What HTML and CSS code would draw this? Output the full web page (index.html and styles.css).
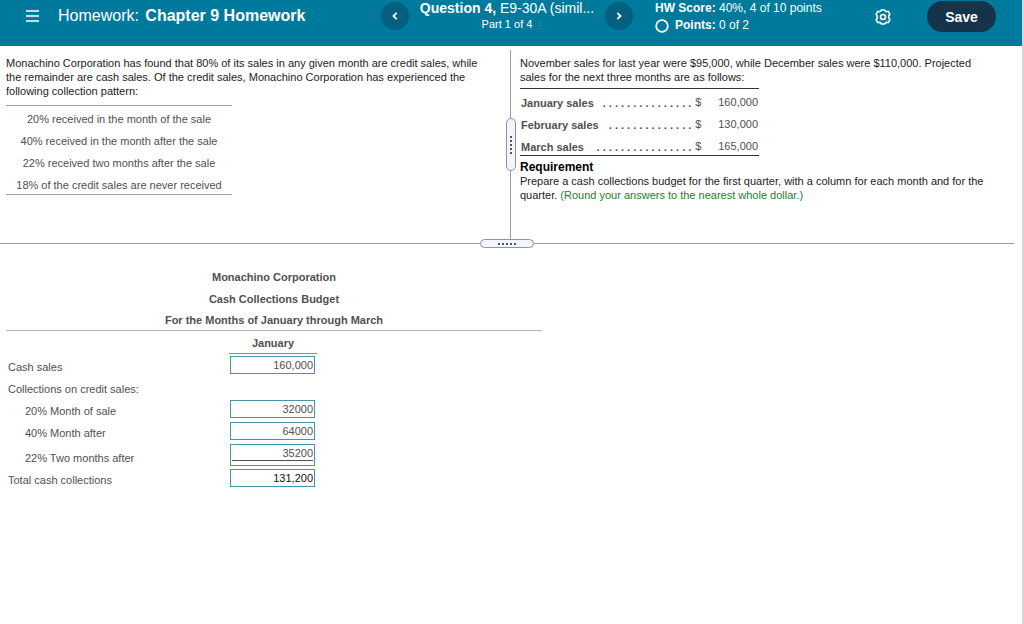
FILE: index.html
```html
<!DOCTYPE html>
<html lang="en">
<head>
  <meta charset="UTF-8" />
  <meta name="viewport" content="width=device-width, initial-scale=1" />
  <title>Chapter 9 Homework</title>
  <link rel="stylesheet" href="styles.css">
</head>
<body>
  <header class="topbar">
    <div class="brand">
      <button type="button" class="icon-btn" aria-label="Menu">
        <svg width="14" height="12" viewBox="0 0 14 12" stroke="#fff" stroke-width="1.6"><path d="M0 1h13M0 6h13M0 11h13" /></svg>
      </button>
      <h1>Homework: <b>Chapter 9 Homework</b></h1>
    </div>

    <nav class="question-nav">
      <button type="button" class="round-btn" aria-label="Previous question">
        <svg width="6" height="8" viewBox="0 0 6 8" fill="none" stroke="#fff" stroke-width="1.8"><path d="M4.7 0.8L1.5 4l3.2 3.2" /></svg>
      </button>
      <div class="question">
        <div class="question-title"><b>Question 4,</b> E9-30A (simil...</div>
        <div class="question-part">Part 1 of 4</div>
      </div>
      <button type="button" class="round-btn" aria-label="Next question">
        <svg width="6" height="8" viewBox="0 0 6 8" fill="none" stroke="#fff" stroke-width="1.8"><path d="M1.3 0.8L4.5 4 1.3 7.2" /></svg>
      </button>
    </nav>

    <div class="status">
      <div class="score">
        <div><b>HW Score:</b> 40%, 4 of 10 points</div>
        <div class="points">
          <svg width="14" height="14" viewBox="0 0 14 14"><circle cx="7" cy="7" r="5.8" fill="none" stroke="#fff" stroke-width="1.8" /></svg>
          <span><b>Points:</b> 0 of 2</span>
        </div>
      </div>
      <div class="actions">
        <button type="button" class="icon-btn" aria-label="Settings">
          <svg width="16" height="16" viewBox="0 0 16 16" fill="none" stroke="#fff" stroke-width="1.6" stroke-linejoin="round">
            <path d="M6.4 1h3.2q.6 1.900 2.400 1.500l1.200-.1 1.700 2.900q-1.700 1.200-1.200 2.700 0 1.200 1.200 2.700l-1.700 2.900q-1.900-.6-3 .6l-.6.8H6.400q-.6-1.900-2.400-1.500l-1.200.1-1.700-2.900q1.700-1.200 1.200-2.700 0-1.200-1.200-2.700l1.700-2.900q1.900.6 3-.6z" />
            <circle cx="8" cy="8" r="2.5" />
          </svg>
        </button>
        <button type="button" class="save-btn">Save</button>
      </div>
    </div>
  </header>

  <main>
    <div class="panes">
      <section class="pane">
        <p>Monachino Corporation has found that 80% of its sales in any given month are credit sales, while the remainder are cash sales. Of the credit sales, Monachino Corporation has experienced the following collection pattern:</p>
        <table class="pattern">
          <tr><td>20% received in the month of the sale</td></tr>
          <tr><td>40% received in the month after the sale</td></tr>
          <tr><td>22% received two months after the sale</td></tr>
          <tr><td>18% of the credit sales are never received</td></tr>
        </table>
      </section>

      <section class="pane pane-right">
        <p>November sales for last year were $95,000, while December sales were $110,000. Projected sales for the next three months are as follows:</p>
        <table class="sales">
          <tr>
            <th scope="row"><span class="leader"><span>January sales</span><span>. . . . . . . . . . . . . . .</span></span></th>
            <td>$</td>
            <td class="num">160,000</td>
          </tr>
          <tr>
            <th scope="row"><span class="leader"><span>February sales</span><span>. . . . . . . . . . . . . .</span></span></th>
            <td>$</td>
            <td class="num">130,000</td>
          </tr>
          <tr>
            <th scope="row"><span class="leader"><span>March sales</span><span>. . . . . . . . . . . . . . . .</span></span></th>
            <td>$</td>
            <td class="num">165,000</td>
          </tr>
        </table>
        <h2>Requirement</h2>
        <p>Prepare a cash collections budget for the first quarter, with a column for each month and for the quarter. <span class="hint">(Round your answers to the nearest whole dollar.)</span></p>
      </section>

      <!-- drag handles on the split lines -->
      <div class="grip grip-v"><i></i><i></i><i></i><i></i><i></i></div>
      <div class="grip grip-h"><i></i><i></i><i></i><i></i><i></i></div>
    </div>

    <table class="budget">
      <thead>
        <tr><th colspan="3">Monachino Corporation</th></tr>
        <tr><th colspan="3">Cash Collections Budget</th></tr>
        <tr class="ruled"><th colspan="3">For the Months of January through March</th></tr>
        <tr class="months"><td class="col-label"></td><th scope="col" class="col-month">January</th><td></td></tr>
      </thead>
      <tbody>
        <tr class="first-item">
          <td><label for="cash-sales">Cash sales</label></td>
          <td class="entry"><span class="box"><input type="text" id="cash-sales" value="160,000"></span></td>
          <td></td>
        </tr>
        <tr>
          <td>Collections on credit sales:</td>
          <td></td>
          <td></td>
        </tr>
        <tr>
          <td class="indent"><label for="month-of-sale">20% Month of sale</label></td>
          <td class="entry"><span class="box"><input type="text" id="month-of-sale" value="32000"></span></td>
          <td></td>
        </tr>
        <tr>
          <td class="indent"><label for="month-after">40% Month after</label></td>
          <td class="entry"><span class="box"><input type="text" id="month-after" value="64000"></span></td>
          <td></td>
        </tr>
        <tr class="last-item">
          <td class="indent"><label for="two-months">22% Two months after</label></td>
          <td class="entry"><span class="box"><input type="text" id="two-months" value="35200"></span></td>
          <td></td>
        </tr>
        <tr class="total">
          <td><label for="total">Total cash collections</label></td>
          <td class="entry"><span class="box"><input type="text" id="total" value="131,200"></span></td>
          <td></td>
        </tr>
      </tbody>
    </table>
  </main>
</body>
</html>
```
FILE: styles.css
```css
* {
  box-sizing: border-box;
}
body {
  margin: 0;
  min-height: 100vh;
  border-right: 2px solid #d4d6d8;
  background: #fff;
  color: #222;
  font-family: "Liberation Sans", Arial, sans-serif;
  font-size: 11px;
  line-height: 14px;
}
p, h1, h2 {
  margin: 0;
}
button {
  padding: 0;
  border: none;
  font-family: inherit;
  color: #fff;
  cursor: pointer;
}

/* top bar */
.topbar {
  display: flex;
  height: 46px;
  padding: 0 26px;
  background: #007a9c;
  color: #fff;
}
.brand {
  flex: 1;
  display: flex;
  align-items: center;
  gap: 18px;
  height: 32px;
}
.brand h1 {
  font-size: 16px;
  line-height: 20px;
  font-weight: normal;
  white-space: nowrap;
}
.brand b {
  margin-left: 2px;
}
.icon-btn {
  display: flex;
  background: none;
}
.question-nav {
  display: flex;
  align-items: flex-start;
  gap: 10px;
  margin-left: 14px;
}
.round-btn {
  display: flex;
  align-items: center;
  justify-content: center;
  width: 28px;
  height: 28px;
  margin-top: 2px;
  border-radius: 50%;
  background: #05607f;
}
.question {
  width: 176px;
  text-align: center;
  white-space: nowrap;
}
.question-title {
  font-size: 14px;
  line-height: 16px;
}
.question-part {
  line-height: 16px;
}
.status {
  flex: 1;
  display: flex;
  justify-content: space-between;
  padding-left: 22px;
}
.score {
  font-size: 12px;
  line-height: 17px;
  white-space: nowrap;
}
.points {
  display: flex;
  align-items: center;
  gap: 6px;
}
.actions {
  display: flex;
  align-items: center;
  gap: 36px;
  height: 33px;
}
.save-btn {
  width: 69px;
  height: 31px;
  border-radius: 16px;
  background: #15334a;
  font-size: 14px;
  font-weight: bold;
}

/* question text */
.panes {
  position: relative;
  display: grid;
  grid-template-columns: 85fr 84fr;
  margin: 4px 8px 0 0;
  border-bottom: 1px solid #9c9ea0;
}
.pane {
  padding: 6px 20px 41px 6px;
}
.pane-right {
  padding-left: 9px;
  border-left: 1px solid #9c9ea0;
}
.pane h2 {
  margin-top: 4px;
  font-size: 12px;
  line-height: 14px;
  color: #000;
}
.hint {
  color: #23802a;
}
table {
  border-spacing: 0;
  color: #505050;
}
td, th {
  padding: 0;
}
.pattern {
  width: 226px;
  margin-top: 7px;
  border-top: 1px solid #9c9ea0;
  border-bottom: 1px solid #9c9ea0;
  text-align: center;
}
.pattern td {
  height: 22px;
  padding-top: 4px;
}
.sales {
  width: 239px;
  margin-top: 4px;
  border-top: 1px solid #333;
  border-bottom: 1px solid #333;
}
.sales td, .sales th {
  height: 22px;
  padding-top: 6px;
}
.sales td {
  padding: 4px 0 0 4px;
}
.sales .num {
  width: 57px;
  padding-right: 1px;
  text-align: right;
}
.leader {
  display: flex;
  justify-content: space-between;
  padding-left: 1px;
}

.grip {
  position: absolute;
  display: flex;
  align-items: center;
  justify-content: center;
  gap: 2px;
  border: 1px solid #8d959c;
  border-radius: 5px;
  background: #f2f5f9;
}
.grip i {
  width: 2px;
  height: 2px;
  background: #555;
}
.grip-v {
  flex-direction: column;
  top: 68px;
  left: calc(100% * 85 / 169 - 4px);
  width: 10px;
  height: 53px;
}
.grip-h {
  bottom: -5px;
  left: calc(100% * 85 / 169 - 30px);
  width: 54px;
  height: 9px;
}

/* answer table */
.budget {
  width: 536px;
  margin: 20px 0 0 6px;
  border-collapse: collapse;
}
.budget th, .budget td {
  height: 22px;
  padding-top: 3px;
}
.budget .ruled {
  border-bottom: 1px solid #b4b4b4;
}
.budget .months td, .budget .months th,
.budget .first-item td {
  height: 23px;
}
.budget .col-label {
  width: 223px;
}
.budget .col-month {
  width: 88px;
  border-bottom: 1px solid #7890a0;
}
.budget tbody td:first-child {
  padding-left: 2px;
  vertical-align: bottom;
  line-height: 18px;
}
.budget tbody .indent:first-child {
  padding-left: 19px;
}
.budget .entry {
  padding: 2px 2px 0 1px;
  vertical-align: top;
}
.box {
  display: block;
  border: 1px solid #4a94a8;
}
.box input {
  display: block;
  width: 100%;
  height: 16px;
  padding: 0 1px;
  border: none;
  background: none;
  font: inherit;
  color: #505050;
  text-align: right;
}
.budget .last-item td {
  height: 25px;
}
.last-item .box {
  padding: 0 1px 4px;
}
.last-item .box input {
  padding: 0;
  border-bottom: 1px solid #505050;
}
.total .box input {
  color: #111;
}
```
